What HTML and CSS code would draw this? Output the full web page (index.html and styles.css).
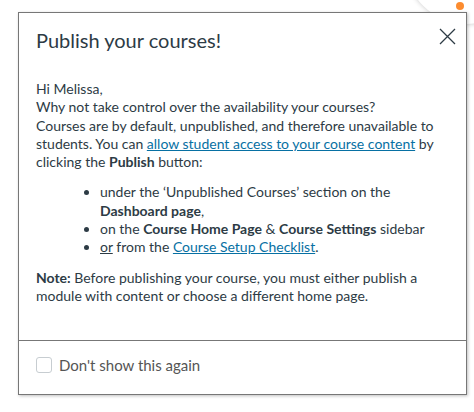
FILE: index.html
```html
<!DOCTYPE html>
<html>
<head>
<meta charset="utf-8">
<link rel="stylesheet" href="styles.css">
</head>
<body>
<div class="backdrop-avatar"><span class="badge"></span></div>
<div class="dialog">
  <div class="dialog-header">
    <h2 class="dialog-title">Publish your courses!</h2>
    <button class="close-btn" aria-label="Close">
      <svg width="17" height="17" viewBox="0 0 17 17"><path d="M1 1 L16 16 M16 1 L1 16" stroke="#2d3b45" stroke-width="1.3" fill="none"/></svg>
    </button>
  </div>
  <div class="dialog-body">
    <p class="intro">Hi Melissa,<br>Why not take control over the availability your courses?<br>Courses are by default, unpublished, and therefore unavailable to students. You can <a href="#">allow student access to your course content</a> by clicking the <b>Publish</b> button:</p>
    <ul class="places">
      <li>under the ‘Unpublished Courses’ section on the <b>Dashboard page</b>,</li>
      <li>on the <b>Course Home Page</b> &amp; <b>Course Settings</b> sidebar</li>
      <li><u>or</u> from the <a href="#">Course Setup Checklist</a>.</li>
    </ul>
    <p class="note"><b>Note:</b> Before publishing your course, you must either publish a module with content or choose a different home page.</p>
  </div>
  <div class="dialog-footer">
    <label class="check"><span class="box"></span>Don't show this again</label>
  </div>
</div>
</body>
</html>
```
FILE: styles.css
```css
html, body {
  margin: 0;
  padding: 0;
  background: #fff;
  font-family: Lato, "Open Sans", sans-serif;
  color: #2d3b45;
}
body {
  position: relative;
  width: 474px;
  height: 412px;
  overflow: hidden;
}
.backdrop-avatar {
  position: absolute;
  left: 405px;
  top: -100px;
  width: 124px;
  height: 124px;
  border-radius: 50%;
  background: #fff;
  box-shadow: 0 0 5px rgba(0,0,0,0.22);
}
.badge {
  position: absolute;
  left: 51px;
  top: 102px;
  width: 8px;
  height: 8px;
  border-radius: 50%;
  background: #fc8c2f;
}
.dialog {
  position: relative;
  margin: 12px 0 0 18px;
  width: 447px;
  border: 1px solid #777;
  background: #fff;
  box-shadow: 1px 1px 3px rgba(0,0,0,0.25);
}
.dialog-header {
  display: flex;
  justify-content: space-between;
  align-items: flex-start;
  padding: 14px 10px 0 17px;
}
.dialog-title {
  margin: 0;
  font-size: 20px;
  font-weight: 400;
  line-height: 26px;
}
.close-btn {
  border: 0;
  background: none;
  padding: 0;
  margin-top: 1px;
  width: 17px;
  height: 17px;
}
.close-btn svg {
  display: block;
}
.dialog-body {
  padding: 27px 17px 35px 17px;
  font-size: 14px;
  line-height: 18.3px;
}
.dialog-body p {
  margin: 0;
}
.dialog-body a {
  color: #0770a3;
}
.places {
  margin: 12px 0;
  padding-left: 64px;
}
.dialog-footer {
  border-top: 1px solid #777;
  padding: 14px 17px 19px 17px;
  font-size: 15px;
  line-height: 20px;
  color: #555;
}
.check {
  display: flex;
  align-items: center;
  gap: 7px;
}
.box {
  width: 14px;
  height: 14px;
  border: 1px solid #c7cdd1;
  border-radius: 3px;
}
```
